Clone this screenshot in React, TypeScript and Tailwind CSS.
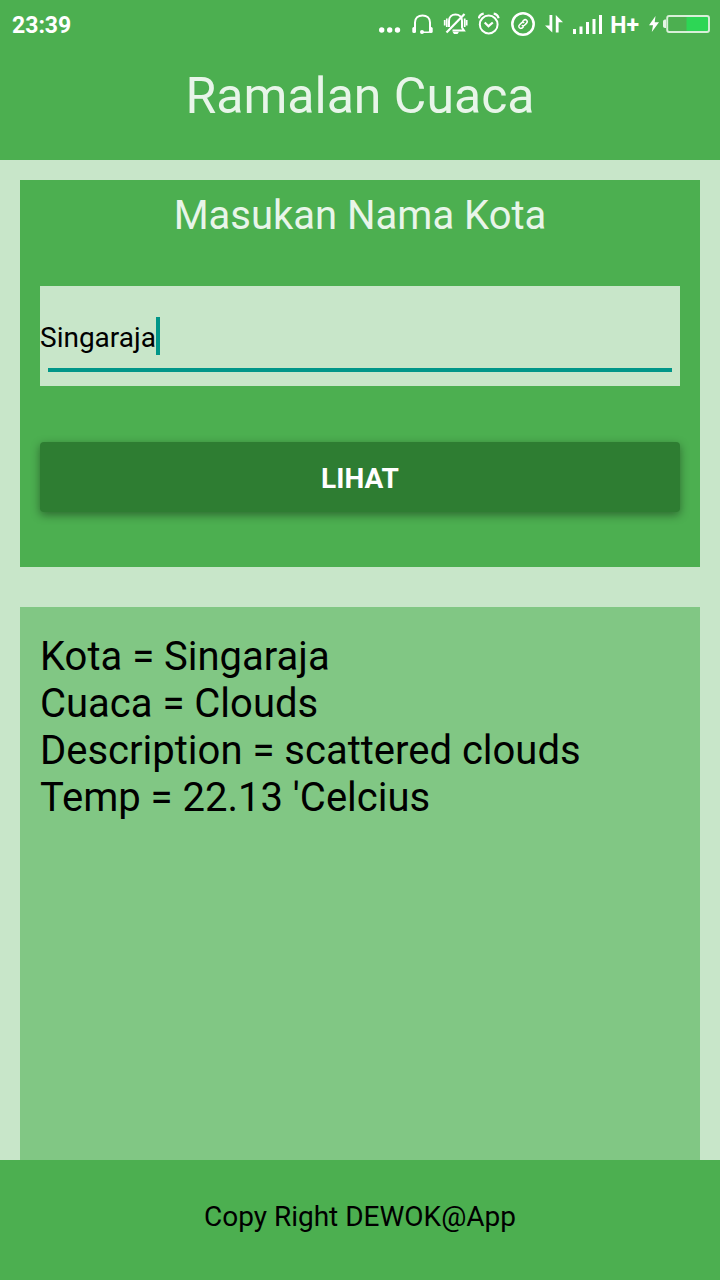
import { useState } from "react";

function StatusIcons() {
  return (
    <div className="flex items-center gap-[10px] text-white" aria-hidden="true">
      <svg width="23" height="24" viewBox="0 0 23 24" fill="currentColor">
        <circle cx="2.7" cy="18" r="2.7" />
        <circle cx="10.7" cy="18" r="2.7" />
        <circle cx="18.5" cy="18" r="2.7" />
      </svg>
      <svg width="21" height="24" viewBox="0 0 21 24" fill="none" stroke="currentColor" strokeWidth="2">
        <path d="M3 17V10.5C3 6.2 6.2 3.4 10.5 3.4S18 6.2 18 10.5V17" />
        <path d="M10.5 20.2H16.5C17.5 20.2 18 19.6 18 18.5" strokeWidth="1.6" />
        <rect x="0.3" y="15" width="3.7" height="6" rx="1.5" fill="currentColor" stroke="none" />
        <rect x="17" y="15" width="3.7" height="6" rx="1.5" fill="currentColor" stroke="none" />
        <circle cx="10" cy="20" r="2" fill="currentColor" stroke="none" />
      </svg>
      <svg width="25" height="24" viewBox="0 0 25 24" fill="none" stroke="currentColor" strokeWidth="2">
        <path d="M6 15V9C6 5 8.8 2.5 12.5 2.5S19 5 19 9V15.5L21 18.6H9.5" />
        <path d="M3.5 20.5L21.5 2" strokeWidth="2.2" />
        <path d="M1.7 8v5.5M3.8 6.5v8.5M21.7 6.5v8.5M23.7 8v5.5" strokeWidth="1.7" />
        <path d="M9.5 19.7H16L14.5 22H11Z" fill="currentColor" stroke="none" />
      </svg>
      <svg width="23" height="24" viewBox="0 0 23 24" fill="none" stroke="currentColor" strokeWidth="2">
        <circle cx="10.7" cy="12.5" r="8.9" />
        <path d="M6.7 10.5L10.5 14.2L14.8 10.5" strokeWidth="2.2" />
        <path d="M.8 6.3C1.3 4 3.3 2 5.7 1.7M20.6 6.3C20.1 4 18.1 2 15.7 1.7" strokeWidth="2.2" />
      </svg>
      <svg width="24" height="24" viewBox="0 0 24 24" fill="none" stroke="currentColor">
        <circle cx="12" cy="12" r="10.7" strokeWidth="2.5" />
        <path d="M11.3 9.7L12.5 8.5C13.5 7.5 14.8 7.5 15.6 8.3C16.4 9.1 16.4 10.4 15.4 11.4L13.5 13.2C12.6 14 11.6 13.9 10.8 13.2M12.7 14.4L11.5 15.6C10.5 16.6 9.2 16.6 8.4 15.8C7.6 15 7.6 13.7 8.6 12.7L10.5 10.9C11.4 10.1 12.4 10.2 13.2 10.9" strokeWidth="1.5" />
      </svg>
      <svg width="18" height="24" viewBox="0 0 18 24" fill="currentColor">
        <path d="M4.5 3H7.3V20.500L0 13.500H4.500ZM10.800 3L18 10.200H13.600V20.500H10.800Z" />
      </svg>
      <div className="flex items-center gap-2">
        <svg width="29" height="24" viewBox="0 0 29 24" fill="currentColor">
          <path d="M0 17h3v5H0ZM6.500 14.500h3v7.500h-3ZM13 10h3v12h-3ZM19.500 7h3v15h-3ZM26 3h3v19h-3Z" />
        </svg>
        <span className="pt-[3px] text-[23px] leading-6 font-bold">H+</span>
      </div>
      <div className="flex items-center gap-1">
        <svg width="10" height="24" viewBox="0 0 10 24" fill="currentColor">
          <path d="M6.500 4L0 13.200H4L2.800 20L10 10.200H5.700Z" />
        </svg>
        <svg width="47" height="24" viewBox="0 0 47 24">
          <path d="M3 7.500H2C.8 7.500 0 8.500 0 9.500V14C0 15 .8 16 2 16H3Z" fill="#e5f4e5" />
          <rect x="23.500" y="4" width="22" height="16" fill="#2dd655" />
          <rect x="4.200" y="4" width="41.800" height="16" rx="2" fill="none" stroke="#d9efd9" strokeWidth="1.900" />
        </svg>
      </div>
    </div>
  );
}

export default function App() {
  const [city, setCity] = useState("Singaraja");

  return (
    <div className="flex min-h-screen flex-col bg-[#c8e6c9] font-[Roboto,sans-serif] text-black">
      <header className="bg-[#4caf50] pb-[30px]">
        <div className="flex h-12 items-center justify-between pr-[10px] pl-3">
          <time className="pt-[3px] text-[23px] leading-6 font-bold text-white">23:39</time>
          <StatusIcons />
        </div>
        <h1 className="pt-[14px] text-center text-[50px] leading-[68px] text-[#e8f5e9]">Ramalan Cuaca</h1>
      </header>

      <main className="flex flex-1 flex-col gap-10 px-5 pt-5">
        <form
          className="flex flex-col bg-[#4caf50] px-5 pt-3 pb-[55px]"
          onSubmit={(event) => event.preventDefault()}
        >
          <label htmlFor="city" className="text-center text-[40px] leading-[47px] text-[#e8f5e9]">
            Masukan Nama Kota
          </label>
          <div className="mt-[47px] flex h-[100px] flex-col justify-end bg-[#c8e6c9] pb-[14px]">
            <div className="flex items-center pb-[13px]">
              <input
                id="city"
                className="field-sizing-content h-[38px] max-w-full bg-transparent p-0 pt-[2px] text-[28px] leading-9 caret-transparent outline-none"
                value={city}
                onChange={(event) => setCity(event.target.value)}
              />
              <span className="h-[38px] w-1 bg-[#009688]" />
            </div>
            <div className="mx-2 h-1 bg-[#009688]" />
          </div>
          <button
            type="submit"
            className="mt-14 h-[70px] rounded-[4px] bg-[#2e7d32] pt-1 text-[28px] leading-8 font-bold text-white shadow-[0_3px_10px_rgba(0,0,0,0.4)]"
          >
            LIHAT
          </button>
        </form>

        <section className="flex-1 bg-[#81c784] px-5 pt-[26px] text-[40px] leading-[47px]">
          <p>Kota = Singaraja</p>
          <p>Cuaca = Clouds</p>
          <p>Description = scattered clouds</p>
          <p>Temp = 22.13 'Celcius</p>
        </section>
      </main>

      <footer className="flex h-[120px] items-center justify-center bg-[#4caf50] pb-[6px] text-[28px] leading-8">
        Copy Right DEWOK@App
      </footer>
    </div>
  );
}
